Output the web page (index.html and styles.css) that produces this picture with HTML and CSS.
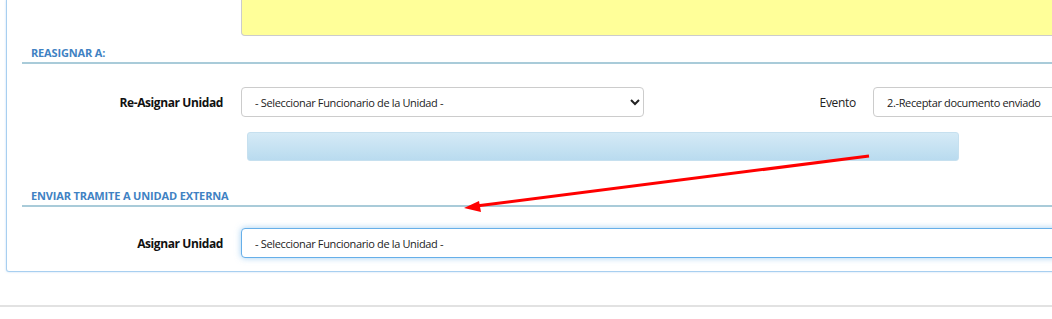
FILE: index.html
```html
<!DOCTYPE html>
<html lang="es">

<head>
    <meta charset="utf-8">
    <title>Derivar tramite</title>
    <link rel="stylesheet" href="styles.css">
</head>

<body>
    <div class="panel">
        <div class="fila-nota">
            <div class="nota"></div>
        </div>

        <h3 class="titulo">REASIGNAR A:</h3>
        <div class="fila">
            <label class="etiqueta">Re-Asignar Unidad</label>
            <select class="campo campo-corto">
                <option>- Seleccionar Funcionario de la Unidad -</option>
            </select>
            <label class="etiqueta-evento">Evento</label>
            <select class="campo campo-evento">
                <option>2.-Receptar documento enviado</option>
            </select>
        </div>
        <div class="fila-barra">
            <div class="barra"></div>
        </div>

        <h3 class="titulo titulo-externa">ENVIAR TRAMITE A UNIDAD EXTERNA</h3>
        <div class="fila fila-externa">
            <label class="etiqueta">Asignar Unidad</label>
            <select class="campo campo-largo activo">
                <option>- Seleccionar Funcionario de la Unidad -</option>
            </select>
        </div>
    </div>

    <hr class="separador">

    <!-- flecha de anotacion -->
    <svg class="flecha" width="1052" height="319" viewBox="0 0 1052 319">
        <line x1="869" y1="156" x2="476" y2="206" stroke="#ff0000" stroke-width="3" />
        <polygon points="464,208 479,201 481,212" fill="#ff0000" />
    </svg>
</body></html>
```

FILE: styles.css
```css
/****GENERAL****/

body {
    margin: 0;
    background-color: #ffffff;
    font-family: 'Open Sans', sans-serif;
    font-size: 11px;
    color: #222222;
    overflow: hidden;
    width: 1052px;
    height: 319px;
    position: relative;
}

/****PANEL****/

.panel {
    margin-left: 6px;
    width: 1200px;
    border: 1px solid #a8cff0;
    border-top: none;
    border-radius: 0 0 3px 3px;
    box-shadow: 0 0 2px rgba(120, 180, 235, 0.5);
    padding-bottom: 13px;
}

.fila-nota {
    padding-left: 234px;
}

.nota {
    height: 35px;
    background-color: #ffff99;
    border: 1px solid #cccccc;
    border-top: none;
    border-radius: 0 0 0 4px;
}

.titulo {
    margin: 10px 0 0 15px;
    padding: 0 0 2px 9px;
    font-size: 11px;
    line-height: 14px;
    font-weight: 700;
    letter-spacing: -0.15px;
    color: #3f82c3;
    border-bottom: 2px solid #a9cbd9;
}

.titulo-externa {
    margin-top: 28px;
}

.fila {
    display: flex;
    align-items: center;
    margin-top: 23px;
}

.fila-externa {
    margin-top: 21px;
}

.etiqueta {
    width: 216px;
    margin-right: 18px;
    text-align: right;
    font-weight: 700;
    font-size: 12px;
    letter-spacing: -0.4px;
    color: #111111;
}

.etiqueta-evento {
    width: 212px;
    padding-right: 17px;
    text-align: right;
    font-size: 12px;
    letter-spacing: -0.3px;
    color: #222222;
}

.campo {
    height: 30px;
    box-sizing: border-box;
    border: 1px solid #cccccc;
    border-radius: 4px;
    background-color: #ffffff;
    font-family: 'Open Sans', sans-serif;
    font-size: 11px;
    letter-spacing: -0.35px;
    color: #222222;
    padding: 0 9px;
}

.campo-corto {
    width: 403px;
}

.campo-evento {
    width: 260px;
}

.campo-largo {
    width: 900px;
}

.activo {
    border-color: #66afe9;
    box-shadow: 0 0 6px rgba(102, 175, 233, 0.6);
    outline: none;
}

.fila-barra {
    padding: 15px 0 0 240px;
}

.barra {
    width: 710px;
    height: 27px;
    border: 1px solid #c6e0ef;
    border-radius: 3px;
    background: linear-gradient(#d5eaf6, #b9dbef);
}

/****PIE****/

.separador {
    margin: 33px 0 0 0;
    border: none;
    border-top: 2px solid #e2e2e2;
}

.flecha {
    position: absolute;
    left: 0;
    top: 0;
    pointer-events: none;
}
```
